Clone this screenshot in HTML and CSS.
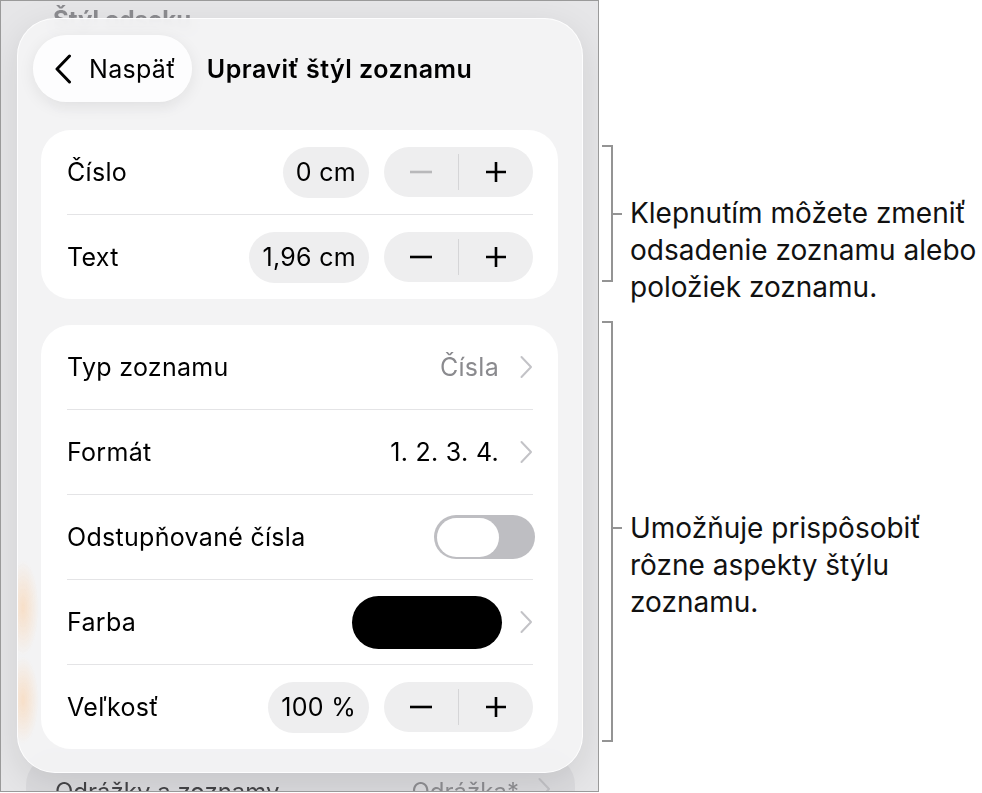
FILE: index.html
```html
<!DOCTYPE html>
<html lang="sk">
<head>
    <meta charset="UTF-8">
    <meta name="viewport" content="width=device-width, initial-scale=1.0">
    <title>Upraviť štýl zoznamu</title>
    <link rel="stylesheet" href="styles.css">
</head>
<body>
<div class="page">

    <div class="screen">
        <!-- the format sidebar that sits under the popover -->
        <div class="backdrop">
            <div class="backdrop-title">Štýl odseku</div>
            <div class="backdrop-sub">Odsadenie</div>
            <div class="backdrop-card">
                <span class="backdrop-label">Odrážky a zoznamy</span>
                <span class="backdrop-value">Odrážka*
                    <svg width="14" height="24" viewBox="0 0 14 24"><path d="M2.5 2 L12 12 L2.5 22" class="chev-line"/></svg>
                </span>
            </div>
        </div>

        <div class="panel">
            <div class="panel-head">
                <button class="back">
                    <svg width="18" height="30" viewBox="0 0 18 30"><path d="M15.5 2 L3 15 L15.5 28" fill="none" stroke="#000" stroke-width="3" stroke-linecap="round" stroke-linejoin="round"/></svg>
                    Naspäť
                </button>
                <h1>Upraviť štýl zoznamu</h1>
            </div>

            <div class="card card-first">
                <div class="row">
                    <span class="label">Číslo</span>
                    <span class="pill">0 cm</span>
                    <div class="stepper">
                        <span class="step">
                            <svg width="24" height="24" viewBox="0 0 24 24"><path d="M1 12 H23" class="sign sign-off"/></svg>
                        </span>
                        <span class="sep"></span>
                        <span class="step">
                            <svg width="24" height="24" viewBox="0 0 24 24"><path d="M2 12 H22 M12 2 V22" class="sign"/></svg>
                        </span>
                    </div>
                </div>
                <div class="row">
                    <span class="label">Text</span>
                    <span class="pill">1,96 cm</span>
                    <div class="stepper">
                        <span class="step">
                            <svg width="24" height="24" viewBox="0 0 24 24"><path d="M1 12 H23" class="sign"/></svg>
                        </span>
                        <span class="sep"></span>
                        <span class="step">
                            <svg width="24" height="24" viewBox="0 0 24 24"><path d="M2 12 H22 M12 2 V22" class="sign"/></svg>
                        </span>
                    </div>
                </div>
            </div>

            <div class="card">
                <div class="row">
                    <span class="label">Typ zoznamu</span>
                    <span class="value value-muted">Čísla</span>
                    <svg class="chev" width="14" height="24" viewBox="0 0 14 24"><path d="M2.5 2 L12 12 L2.5 22" class="chev-line"/></svg>
                </div>
                <div class="row">
                    <span class="label">Formát</span>
                    <span class="value">1. 2. 3. 4.</span>
                    <svg class="chev" width="14" height="24" viewBox="0 0 14 24"><path d="M2.5 2 L12 12 L2.5 22" class="chev-line"/></svg>
                </div>
                <div class="row">
                    <span class="label">Odstupňované čísla</span>
                    <span class="toggle"><span class="knob"></span></span>
                </div>
                <div class="row">
                    <span class="label">Farba</span>
                    <span class="swatch"></span>
                    <svg class="chev chev-swatch" width="14" height="24" viewBox="0 0 14 24"><path d="M2.5 2 L12 12 L2.5 22" class="chev-line"/></svg>
                </div>
                <div class="row">
                    <span class="label">Veľkosť</span>
                    <span class="pill">100 %</span>
                    <div class="stepper">
                        <span class="step">
                            <svg width="24" height="24" viewBox="0 0 24 24"><path d="M1 12 H23" class="sign"/></svg>
                        </span>
                        <span class="sep"></span>
                        <span class="step">
                            <svg width="24" height="24" viewBox="0 0 24 24"><path d="M2 12 H22 M12 2 V22" class="sign"/></svg>
                        </span>
                    </div>
                </div>
            </div>
        </div>
    </div>

    <div class="notes">
        <div class="note note-indent">
            <div class="bracket"></div>
            <div class="tick"></div>
            <p>Klepnutím môžete zmeniť<br>odsadenie zoznamu alebo<br>položiek zoznamu.</p>
        </div>
        <div class="note note-style">
            <div class="bracket"></div>
            <div class="tick"></div>
            <p>Umožňuje prispôsobiť<br>rôzne aspekty štýlu<br>zoznamu.</p>
        </div>
    </div>

</div>
</body>
</html>
```

FILE: styles.css
```css
body {
    margin: 0;
    background-color: #fff;
    font-family: Inter, "Noto Sans", sans-serif;
    color: #000;
}
.page {
    display: flex;
    align-items: flex-start;
}

/* device screen */
.screen {
    width: 597px;
    height: 790px;
    border: 1px solid #9a9a9a;
    background-color: #e6e6e8;
    display: grid;
    grid-template: 1fr / 1fr;
    overflow: hidden;
    flex-shrink: 0;
}
.backdrop,
.panel {
    grid-area: 1 / 1;
}
.backdrop {
    display: flex;
    flex-direction: column;
}
.backdrop-title {
    margin: 4px 0 0 52px;
    font-size: 24px;
    line-height: 30px;
    font-weight: 700;
    color: #8c8c90;
    filter: blur(0.6px);
}
.backdrop-sub {
    margin: 47px 0 0 55px;
    font-size: 22px;
    line-height: 28px;
    font-weight: 700;
    color: #8c8c90;
    filter: blur(1px);
}
.backdrop-card {
    margin: auto 23px 0 25px;
    height: 36px;
    padding: 22px 24px 0 29px;
    box-sizing: border-box;
    border-radius: 30px 30px 0 0;
    background-color: #dbdbde;
    display: flex;
    justify-content: space-between;
    font-size: 24px;
    line-height: 30px;
    filter: blur(0.4px);
}
.backdrop-label {
    color: #444447;
}
.backdrop-value {
    color: #8e8e92;
    display: flex;
    gap: 18px;
}

/* popover */
.panel {
    margin: 17px 15px 0 16px;
    height: 755px;
    box-sizing: border-box;
    border: 1px solid rgba(255, 255, 255, 0.9);
    border-radius: 38px;
    background:
        radial-gradient(16px 48px at 5px 589px, rgba(255, 196, 140, 0.42), rgba(255, 196, 140, 0)),
        radial-gradient(16px 44px at 5px 681px, rgba(255, 196, 140, 0.42), rgba(255, 196, 140, 0)),
        rgba(243, 243, 244, 0.93);
    backdrop-filter: blur(4px);
    box-shadow: 0 10px 36px rgba(0, 0, 0, 0.10);
    align-self: start;
}
.panel-head {
    display: flex;
    align-items: center;
    gap: 15px;
    padding: 16px 0 0 15px;
}
.back {
    height: 67px;
    padding: 0 16px 0 21px;
    display: flex;
    align-items: center;
    gap: 17px;
    border: none;
    border-radius: 34px;
    background-color: rgba(255, 255, 255, 0.9);
    box-shadow: 0 4px 16px rgba(0, 0, 0, 0.08);
    font-family: inherit;
    font-size: 25px;
    letter-spacing: 0.3px;
    color: #000;
}
.panel-head h1 {
    margin: 0;
    font-size: 25px;
    font-weight: 600;
    letter-spacing: 0.45px;
}

/* grouped lists */
.card {
    margin: 26px 24px 0 23px;
    border-radius: 30px;
    background-color: #fff;
}
.card-first {
    margin-top: 28px;
}
.row {
    height: 84px;
    margin: 0 25px 0 26px;
    display: flex;
    align-items: center;
    font-size: 25px;
    letter-spacing: 0.3px;
}
.row + .row {
    border-top: 1px solid #e4e4e6;
}
.label {
    margin-right: auto;
}
.pill {
    height: 51px;
    padding: 0 13px;
    display: flex;
    align-items: center;
    border-radius: 26px;
    background-color: #eeeeef;
}
.stepper {
    width: 149px;
    height: 50px;
    margin-left: 15px;
    display: flex;
    align-items: center;
    border-radius: 25px;
    background-color: #eeeeef;
}
.step {
    flex: 1;
    display: flex;
    justify-content: center;
}
.sep {
    width: 1px;
    height: 36px;
    background-color: #d5d5d7;
}
.sign {
    stroke: #000;
    stroke-width: 2.6;
    fill: none;
}
.sign-off {
    stroke: #b8b8ba;
}
.value {
    margin-right: 20px;
}
.value-muted {
    color: #8a8a8e;
}
.chev-line {
    fill: none;
    stroke: #c3c3c7;
    stroke-width: 2;
    stroke-linecap: round;
    stroke-linejoin: round;
}
.chev-swatch {
    margin-left: 17px;
}
.toggle {
    width: 101px;
    height: 44px;
    margin-right: -2px;
    padding: 0 2.5px;
    box-sizing: border-box;
    display: flex;
    align-items: center;
    border-radius: 22px;
    background-color: #bebec2;
}
.knob {
    width: 62px;
    height: 39px;
    border-radius: 20px;
    background-color: #fff;
}
.swatch {
    width: 150px;
    height: 53px;
    border-radius: 27px;
    background-color: #000;
}

/* callouts */
.notes {
    margin-left: 3px;
    padding-top: 145px;
    display: flex;
    flex-direction: column;
    gap: 39px;
}
.note {
    display: flex;
    align-items: center;
}
.bracket {
    width: 9px;
    border: 2px solid #949494;
    border-left: none;
}
.note-indent .bracket {
    height: 133px;
}
.note-style .bracket {
    height: 417px;
}
.tick {
    width: 9px;
    height: 2px;
    background-color: #949494;
}
.note p {
    margin: 0 0 0 8px;
    height: 37px;
    font-size: 28px;
    line-height: 37px;
    white-space: nowrap;
    color: #111;
}
.note-style .tick,
.note-style p {
    margin-bottom: 7px;
}
```
